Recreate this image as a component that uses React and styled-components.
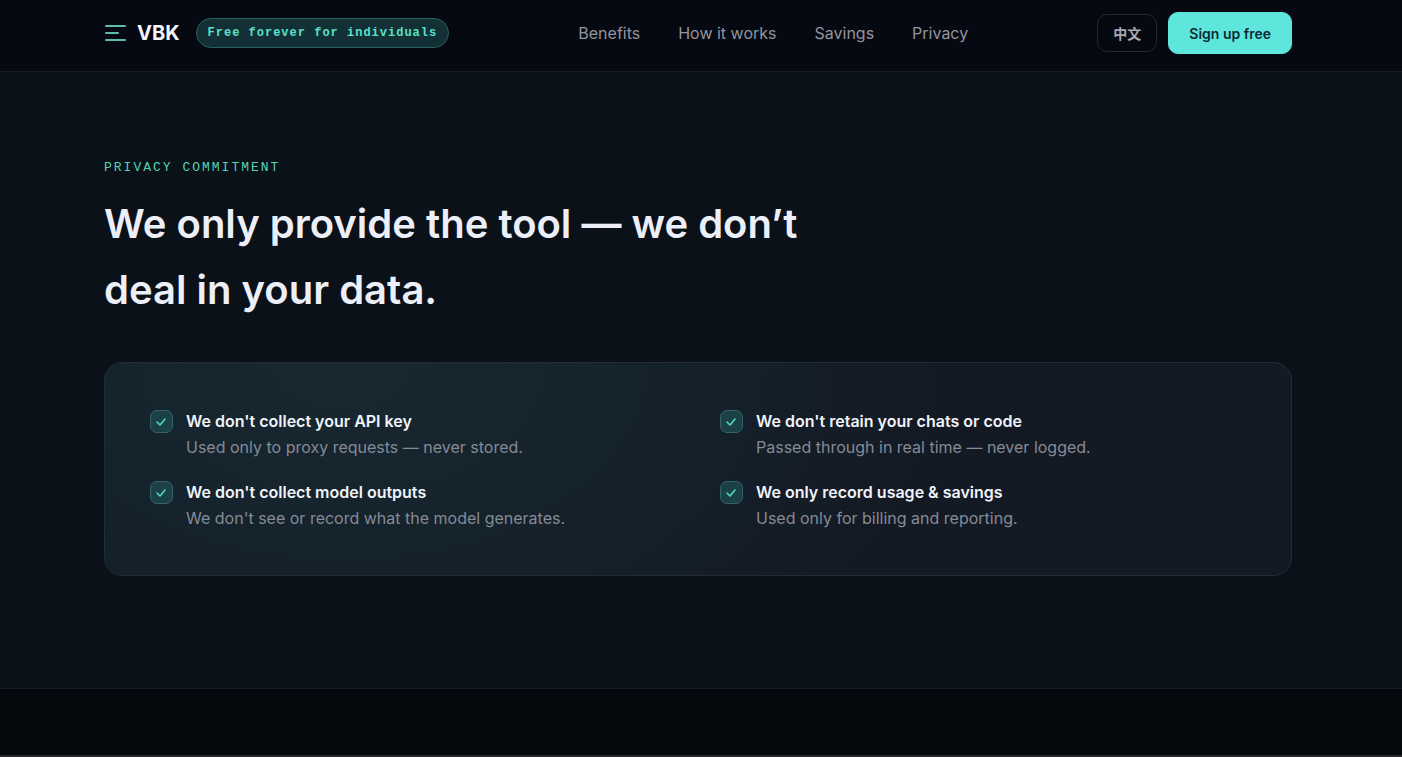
import React from 'react'
import styled, { createGlobalStyle } from 'styled-components'

const GlobalStyle = createGlobalStyle`
    * {
        box-sizing: border-box;
    }
    body {
        margin: 0;
        background-color: #05080d;
        color: #eceff8;
        font-family: Inter, 'Noto Sans CJK SC', sans-serif;
        font-size: 16px;
        line-height: 26px;
    }
    #root {
        display: flex;
        flex-direction: column;
        min-height: 100vh;
    }
`

const Header = styled.header`
    display: flex;
    align-items: center;
    justify-content: space-between;
    padding: 12px 110px 17px 104px;
    background-color: #060912;
    border-bottom: 1px solid #141b23;
`

const Group = styled.div`
    display: flex;
    align-items: center;
    gap: ${(props) => props.$gap};
`

const Logo = styled.a`
    display: flex;
    align-items: center;
    gap: 10px;
    color: #f2f5fb;
    font-size: 20px;
    font-weight: 700;
    text-decoration: none;
`

const Badge = styled.span`
    padding: 0 11px;
    border: 1px solid #2a5f5d;
    border-radius: 16px;
    background-color: #123036;
    color: #5be0c6;
    font-family: 'Liberation Mono', monospace;
    font-size: 12px;
    font-weight: 700;
    line-height: 28px;
    letter-spacing: 1px;
    white-space: nowrap;
`

const Nav = styled.nav`
    display: flex;
    gap: 38px;
`

const NavLink = styled.a`
    color: #92959e;
    font-size: 16px;
    text-decoration: none;
    white-space: nowrap;
`

const Button = styled.button`
    height: ${(props) => (props.$primary ? '42px' : '38px')};
    padding: ${(props) => (props.$primary ? '0 20px' : '0 15px')};
    border: 1px solid ${(props) => (props.$primary ? '#5ee6dc' : '#25282f')};
    border-radius: 10px;
    background-color: ${(props) => (props.$primary ? '#5ee6dc' : '#060912')};
    color: ${(props) => (props.$primary ? '#0b2b32' : '#a9abb3')};
    font-family: inherit;
    font-size: 14px;
    font-weight: 600;
    white-space: nowrap;
    cursor: pointer;
`

const Section = styled.section`
    padding: 83px 110px 112px 104px;
    background-color: #0a1118;
    border-bottom: 1px solid #141d25;
`

const Eyebrow = styled.p`
    margin: 0 0 10px;
    color: #56d3b4;
    font-family: 'Liberation Mono', monospace;
    font-size: 13px;
    letter-spacing: 2px;
    text-transform: uppercase;
`

const Title = styled.h2`
    max-width: 760px;
    margin: 0 0 39px;
    color: #eceff8;
    font-size: 40px;
    font-weight: 600;
    line-height: 66px;
`

const Card = styled.ul`
    display: grid;
    grid-template-columns: 1fr 1fr;
    gap: 19px 44px;
    margin: 0;
    padding: 45px 45px 44px;
    list-style: none;
    border: 1px solid #222c36;
    border-radius: 18px;
    background-color: #141a24;
    background-image: radial-gradient(
        ellipse 50% 180% at 20% 0%,
        #182830,
        #14212b 60%,
        #141a24
    );
`

const Item = styled.li`
    display: flex;
    align-items: flex-start;
    gap: 13px;
`

const Tick = styled.span`
    display: flex;
    align-items: center;
    justify-content: center;
    flex-shrink: 0;
    width: 23px;
    height: 23px;
    margin-top: 2px;
    border: 1px solid #356463;
    border-radius: 7px;
    background-color: #1b4045;
`

const ItemTitle = styled.h3`
    margin: 0;
    color: #f0f3fa;
    font-size: 16px;
    font-weight: 600;
    line-height: 26px;
`

const ItemText = styled.p`
    margin: 0;
    color: #848b96;
`

const Below = styled.div`
    flex: 1;
    border-bottom: 2px solid #29272d;
`

const links = ['Benefits', 'How it works', 'Savings', 'Privacy']

const promises = [
    {
        title: "We don't collect your API key",
        text: 'Used only to proxy requests — never stored.',
    },
    {
        title: "We don't retain your chats or code",
        text: 'Passed through in real time — never logged.',
    },
    {
        title: "We don't collect model outputs",
        text: "We don't see or record what the model generates.",
    },
    {
        title: 'We only record usage & savings',
        text: 'Used only for billing and reporting.',
    },
]

const App = () => {
    return (
        <>
            <GlobalStyle />
            <Header>
                <Group $gap='16px'>
                    <Logo href='#'>
                        <svg width='23' height='18' viewBox='0 0 23 18' aria-hidden='true'>
                            <path
                                d='M2 2h19M2 9h12M2 16h19'
                                stroke='#5bbdb0'
                                strokeWidth='2'
                                strokeLinecap='round'
                            />
                        </svg>
                        VBK
                    </Logo>
                    <Badge>Free forever for individuals</Badge>
                </Group>
                <Nav>
                    {links.map((link) => (
                        <NavLink href='#' key={link}>
                            {link}
                        </NavLink>
                    ))}
                </Nav>
                <Group $gap='11px'>
                    <Button lang='zh'>中文</Button>
                    <Button $primary>Sign up free</Button>
                </Group>
            </Header>
            <Section>
                <Eyebrow>Privacy commitment</Eyebrow>
                <Title>We only provide the tool — we don’t deal in your data.</Title>
                <Card>
                    {promises.map((item) => (
                        <Item key={item.title}>
                            <Tick>
                                <svg width='13' height='13' viewBox='0 0 13 13' fill='none' aria-hidden='true'>
                                    <path
                                        d='M2 7l3 3 5-6'
                                        stroke='#4fd9c4'
                                        strokeWidth='1.6'
                                        strokeLinecap='round'
                                        strokeLinejoin='round'
                                    />
                                </svg>
                            </Tick>
                            <div>
                                <ItemTitle>{item.title}</ItemTitle>
                                <ItemText>{item.text}</ItemText>
                            </div>
                        </Item>
                    ))}
                </Card>
            </Section>
            <Below />
        </>
    )
}

export default App
